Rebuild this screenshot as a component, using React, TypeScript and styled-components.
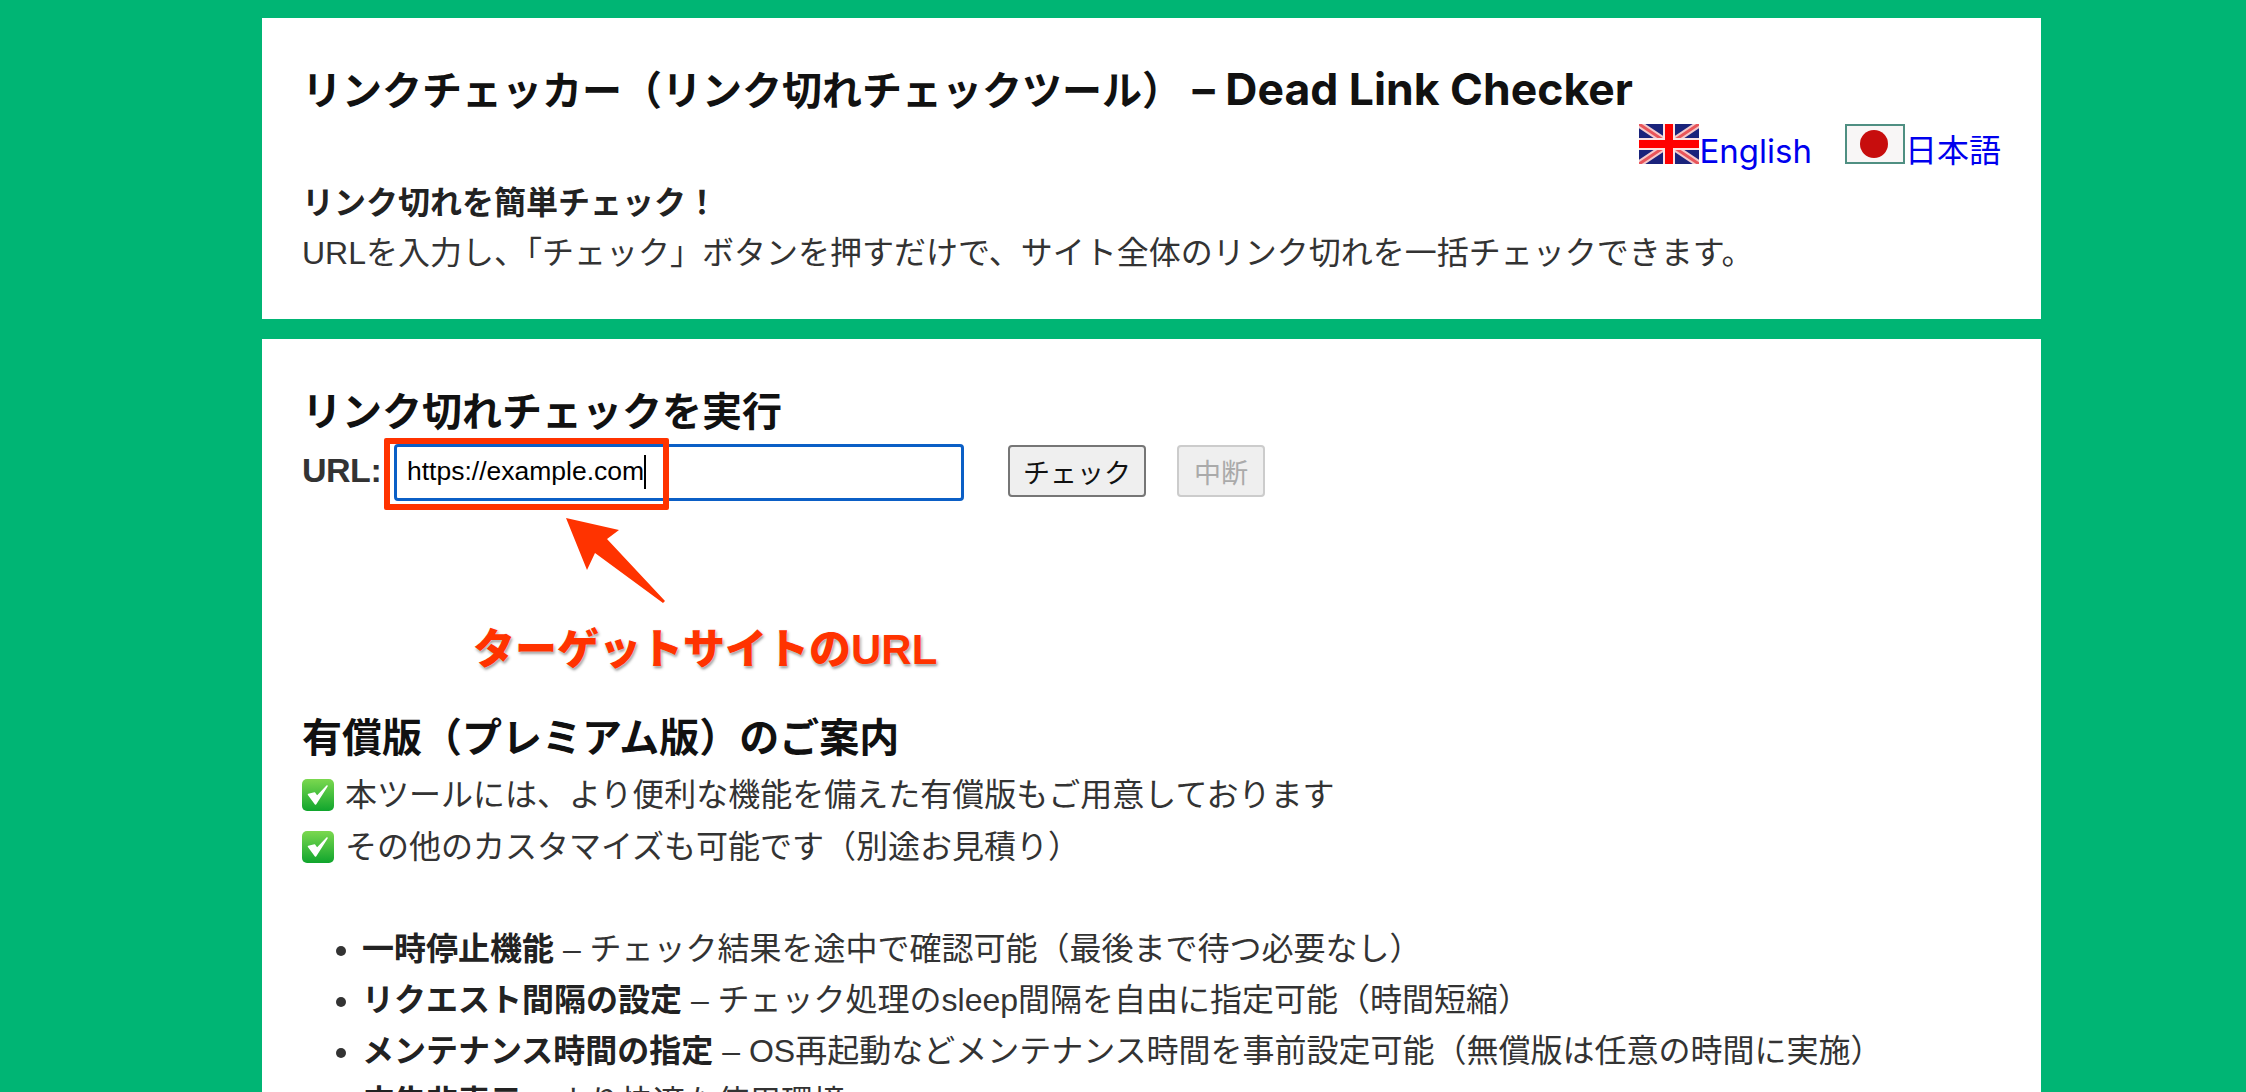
import React from "react";
import styled, { createGlobalStyle } from "styled-components";

const Global = createGlobalStyle`
  html, body { margin: 0; padding: 0; background: #00b574; }
  body { font-family: "Liberation Sans", "Noto Sans CJK JP", sans-serif; color: #222; font-size: 32px; overflow: hidden; height: 1092px; }
`;

const Page = styled.div`
  width: 1779px;
  margin-left: 262px;
  padding: 18px 0 0;
  height: 1092px;
  box-sizing: border-box;
  overflow: hidden;
`;

const TopCard = styled.section`
  background: #fff;
  padding: 41px 40px 0;
  margin-bottom: 20px;
  box-sizing: border-box;
  height: 301px;
`;

const MainCard = styled.section`
  background: #fff;
  padding: 48px 40px 0;
  box-sizing: border-box;
  min-height: 800px;
`;

const Title = styled.h1`
  margin: 0;
  font-size: 40px;
  line-height: 60px;
  font-weight: 700;
  color: #111;
  white-space: nowrap;
`;

const TitleLatin = styled.span`
  font-family: "Inter", "Liberation Sans", sans-serif;
  font-size: 44.5px;
  line-height: 60px;
`;

const LangBar = styled.div`
  display: flex;
  justify-content: flex-end;
  gap: 33px;
  margin-top: 3px;
  height: 47px;
`;

const LangLink = styled.a`
  display: flex;
  align-items: flex-end;
  height: 47px;
  color: #0000ee;
  font-size: 32px;
  line-height: 40px;
`;

const LangLatin = styled.span`
  font-family: "Inter", "Liberation Sans", sans-serif;
  font-size: 33px;
`;

const Flag = styled.svg`
  width: 60px;
  height: 40px;
  flex: none;
  margin-bottom: 7px;
`;

const Lead = styled.p`
  margin: 7px 0 0;
  font-size: 32px;
  line-height: 50px;
  color: #333;
`;

const Section = styled.h2<{ $top?: number }>`
  margin: ${(p) => p.$top ?? 0}px 0 0;
  font-size: 40px;
  line-height: 50px;
  font-weight: 700;
  color: #111;
`;

const Row = styled.div`
  position: relative;
  display: flex;
  align-items: center;
  height: 57px;
  margin-top: 7px;
`;

const UrlLabel = styled.label`
  width: 92px;
  flex: none;
  font-size: 34px;
  font-weight: 700;
  color: #333;
  letter-spacing: -0.5px;
  padding-bottom: 5px;
`;

const UrlInput = styled.div`
  box-sizing: border-box;
  width: 570px;
  height: 57px;
  border: 3px solid #0b5fc6;
  border-radius: 4px;
  padding: 0 10px 2px;
  display: flex;
  align-items: center;
  font-size: 26.5px;
  color: #000;
`;

const Caret = styled.span`
  width: 1.5px;
  height: 34px;
  background: #000;
`;

const Btn = styled.button<{ $off?: boolean }>`
  height: 52px;
  padding: 0 13px;
  margin-bottom: 3px;
  border-radius: 4px;
  background: #efefef;
  font-family: inherit;
  font-size: 27px;
  border: 2px solid ${(p) => (p.$off ? "#ccc" : "#767676")};
  color: ${(p) => (p.$off ? "#aaa" : "#111")};
`;

const CheckBtn = styled(Btn)`
  margin-left: 44px;
`;

const StopBtn = styled(Btn)`
  margin-left: 31px;
  padding: 0 15px;
`;

const Callout = styled.div`
  position: absolute;
  left: 82px;
  top: -6px;
  width: 285px;
  height: 72px;
  box-sizing: border-box;
  border: 6px solid #ff3300;
  border-radius: 2px;
`;

const Arrow = styled.svg`
  position: absolute;
  left: 264px;
  top: 74px;
  width: 100px;
  height: 86px;
`;

const CalloutText = styled.div`
  position: absolute;
  left: 171px;
  top: 182px;
  font-size: 42px;
  line-height: 48px;
  font-weight: 900;
  color: #ff3300;
  white-space: nowrap;
  text-shadow: 0 0 2px #fff, 1px 2px 3px rgba(0, 0, 0, 0.45);
`;

const Lines = styled.div`
  margin-top: 6px;
`;

const Line = styled.div`
  display: flex;
  align-items: center;
  gap: 11px;
  font-size: 32px;
  line-height: 52px;
  color: #333;
`;

const Check = styled.svg`
  width: 32px;
  height: 32px;
  flex: none;
`;

const List = styled.ul`
  margin: 51px 0 0;
  padding: 0 0 0 60px;
  font-size: 32px;
  line-height: 51px;
  color: #333;
`;

const Strong = styled.strong`
  font-weight: 700;
  color: #222;
`;

const UkFlag = () => (
  <Flag viewBox="0 0 60 40">
    <rect width="60" height="40" fill="#1a237b" />
    <path d="M0 0L60 40M60 0L0 40" stroke="#f3c9cb" strokeWidth="7" />
    <path d="M0 0L60 40M60 0L0 40" stroke="#e9555a" strokeWidth="3" />
    <path d="M30 0V40M0 20H60" stroke="#fbe3e3" strokeWidth="12" />
    <path d="M30 0V40M0 20H60" stroke="#f00" strokeWidth="8" />
  </Flag>
);

const JpFlag = () => (
  <Flag viewBox="0 0 60 40">
    <rect x="1" y="1" width="58" height="38" fill="#f8f6f6" stroke="#4f8f82" strokeWidth="2" />
    <circle cx="29" cy="20" r="14" fill="#c70d0d" />
  </Flag>
);

const CheckIcon = () => (
  <Check viewBox="0 0 32 32">
    <defs>
      <linearGradient id="chk" x1="0" y1="0" x2="0" y2="1">
        <stop offset="0" stopColor="#7bd84f" />
        <stop offset="1" stopColor="#10a52d" />
      </linearGradient>
    </defs>
    <rect width="32" height="32" rx="5" fill="url(#chk)" />
    <path d="M6.5 15.5L13.5 25L25 7L15 17.5L12.5 14Z" fill="#fff" stroke="#fff" strokeWidth="1.5" strokeLinejoin="round" />
  </Check>
);

export default function App() {
  return (
    <Page>
      <Global />
      <TopCard>
        <Title>リンクチェッカー（リンク切れチェックツール）<TitleLatin> – Dead Link Checker</TitleLatin></Title>
        <LangBar>
          <LangLink><UkFlag /><LangLatin>English</LangLatin></LangLink>
          <LangLink><JpFlag />日本語</LangLink>
        </LangBar>
        <Lead>
          <Strong>リンク切れを簡単チェック！</Strong>
          <br />
          URLを入力し、「チェック」ボタンを押すだけで、サイト全体のリンク切れを一括チェックできます。
        </Lead>
      </TopCard>
      <MainCard>
        <Section>リンク切れチェックを実行</Section>
        <Row>
          <UrlLabel>URL:</UrlLabel>
          <UrlInput>https://example.com<Caret /></UrlInput>
          <CheckBtn>チェック</CheckBtn>
          <StopBtn $off disabled>中断</StopBtn>
          <Callout />
          <Arrow viewBox="0 0 100 86">
            <path d="M0 0L53 12L41 21L99 83L97 85L29 35L21 52Z" fill="#ff3300" />
          </Arrow>
          <CalloutText>ターゲットサイトのURL</CalloutText>
        </Row>
        <Section $top={212}>有償版（プレミアム版）のご案内</Section>
        <Lines>
          <Line><CheckIcon />本ツールには、より便利な機能を備えた有償版もご用意しております</Line>
          <Line><CheckIcon />その他のカスタマイズも可能です（別途お見積り）</Line>
        </Lines>
        <List>
          <li><Strong>一時停止機能</Strong> – チェック結果を途中で確認可能（最後まで待つ必要なし）</li>
          <li><Strong>リクエスト間隔の設定</Strong> – チェック処理のsleep間隔を自由に指定可能（時間短縮）</li>
          <li><Strong>メンテナンス時間の指定</Strong> – OS再起動などメンテナンス時間を事前設定可能（無償版は任意の時間に実施）</li>
          <li><Strong>広告非表示</Strong> – より快適な使用環境</li>
        </List>
      </MainCard>
    </Page>
  );
}
